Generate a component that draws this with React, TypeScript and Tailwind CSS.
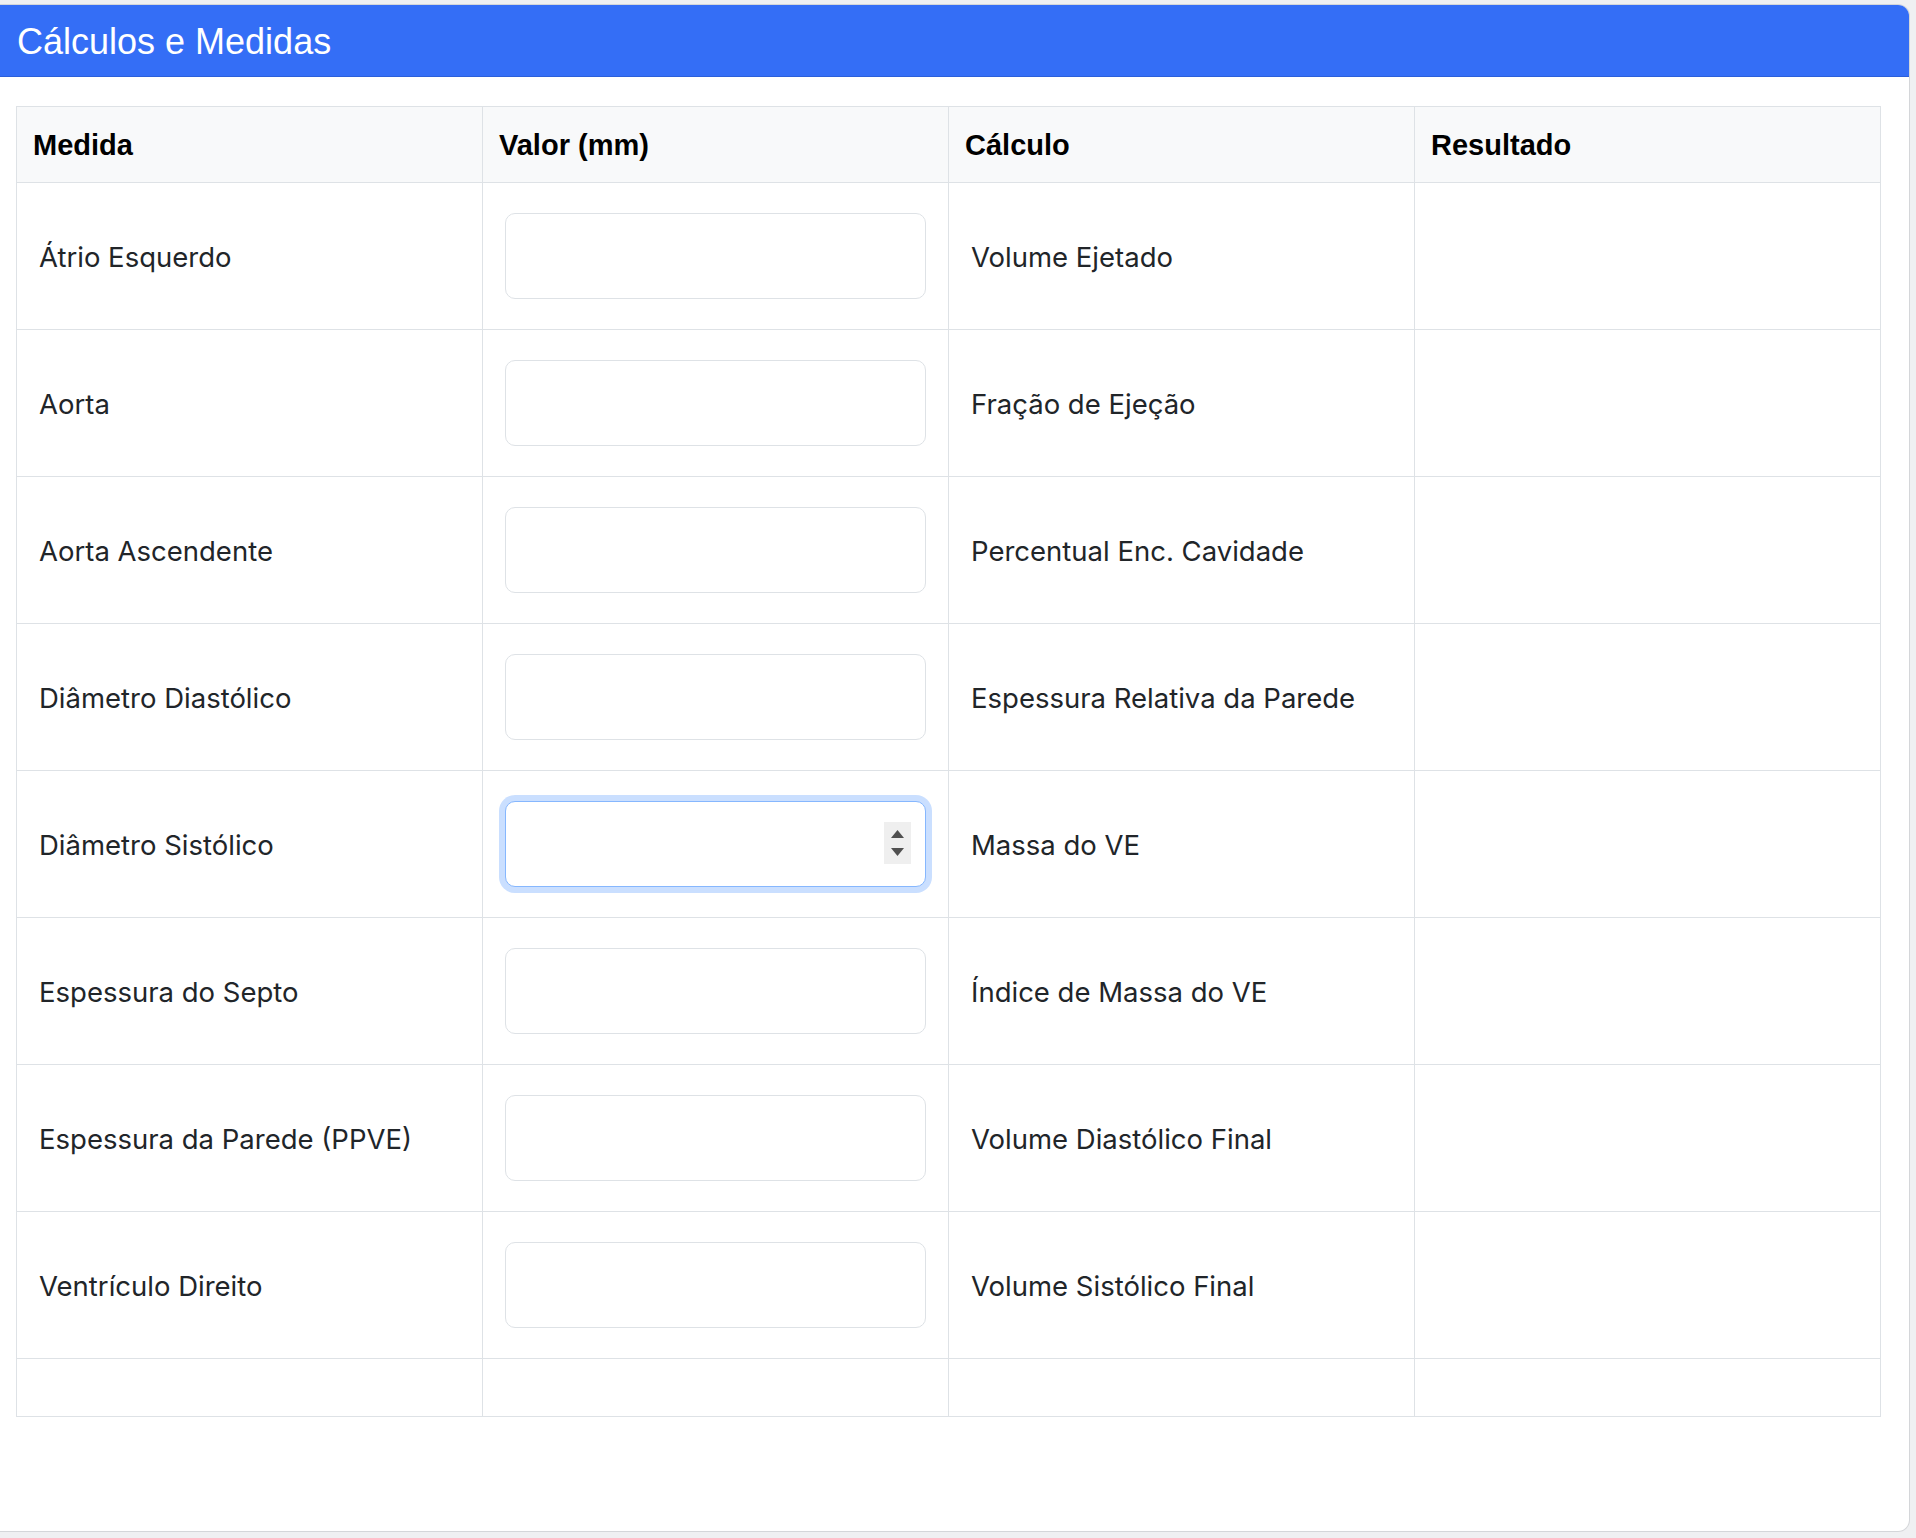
import React from 'react'

const ROWS = [
  { medida: 'Átrio Esquerdo', calculo: 'Volume Ejetado' },
  { medida: 'Aorta', calculo: 'Fração de Ejeção' },
  { medida: 'Aorta Ascendente', calculo: 'Percentual Enc. Cavidade' },
  { medida: 'Diâmetro Diastólico', calculo: 'Espessura Relativa da Parede' },
  { medida: 'Diâmetro Sistólico', calculo: 'Massa do VE', focused: true },
  { medida: 'Espessura do Septo', calculo: 'Índice de Massa do VE' },
  { medida: 'Espessura da Parede (PPVE)', calculo: 'Volume Diastólico Final' },
  { medida: 'Ventrículo Direito', calculo: 'Volume Sistólico Final' },
]

function ValorInput({ focused }: { focused?: boolean }) {
  if (focused) {
    return (
      <div className="relative">
        <input
          type="text"
          className="block w-full h-[86px] rounded-[10px] border border-[#86b7fe] bg-white shadow-[0_0_0_6px_rgba(13,110,253,0.22)] outline-none"
        />
        {/* number spinner */}
        <div className="absolute right-[15px] top-[21px] w-[27px] h-[42px] bg-[#efefef] flex flex-col items-center justify-center gap-[10px]">
          <svg width="13" height="8" viewBox="0 0 13 8"><path d="M6.5 0L13 8H0z" fill="#505050" /></svg>
          <svg width="13" height="8" viewBox="0 0 13 8"><path d="M0 0h13L6.5 8z" fill="#505050" /></svg>
        </div>
      </div>
    )
  }
  return (
    <input
      type="text"
      className="block w-full h-[86px] rounded-[10px] border border-[#dee2e6] bg-white outline-none"
    />
  )
}

export default function App() {
  return (
    <div className="min-h-screen bg-[#eff0f2] pt-[4px] pb-[6px] font-['Inter',sans-serif]">
      <div className="w-[1910px] h-[1528px] bg-white border border-l-0 border-[#d4d6d9] rounded-r-[12px] overflow-hidden flex flex-col">
        {/* Header */}
        <header className="h-[72px] bg-[#346ef6] border-b border-[#2b5fd9] px-[17px] flex items-center shrink-0">
          <h4 className="text-white text-[36px] font-['Liberation_Sans',Arial,sans-serif] leading-none pt-[2px]">Cálculos e Medidas</h4>
        </header>

        <div className="pt-[29px] pl-[16px] pr-[28px]">
          <table className="w-[1865px] table-fixed border-collapse text-[#212529]">
            <thead>
              <tr className="h-[76px] bg-[#f8f9fa]">
                {['Medida', 'Valor (mm)', 'Cálculo', 'Resultado'].map(h => (
                  <th key={h} className="border border-[#dee2e6] px-[16px] pt-[3px] text-left text-[29px] font-bold text-black font-['Liberation_Sans',Arial,sans-serif]">
                    {h}
                  </th>
                ))}
              </tr>
            </thead>
            <tbody>
              {ROWS.map(r => (
                <tr key={r.medida} className="h-[147px]">
                  <td className="border border-[#dee2e6] px-[22px] pt-[4px] text-[27.5px]">{r.medida}</td>
                  <td className="border border-[#dee2e6] px-[22px]">
                    <ValorInput focused={r.focused} />
                  </td>
                  <td className="border border-[#dee2e6] px-[22px] pt-[4px] text-[27.5px]">{r.calculo}</td>
                  <td className="border border-[#dee2e6] px-[22px]"></td>
                </tr>
              ))}
              <tr className="h-[58px]">
                <td className="border border-[#dee2e6]"></td>
                <td className="border border-[#dee2e6]"></td>
                <td className="border border-[#dee2e6]"></td>
                <td className="border border-[#dee2e6]"></td>
              </tr>
            </tbody>
          </table>
        </div>
      </div>
    </div>
  )
}
